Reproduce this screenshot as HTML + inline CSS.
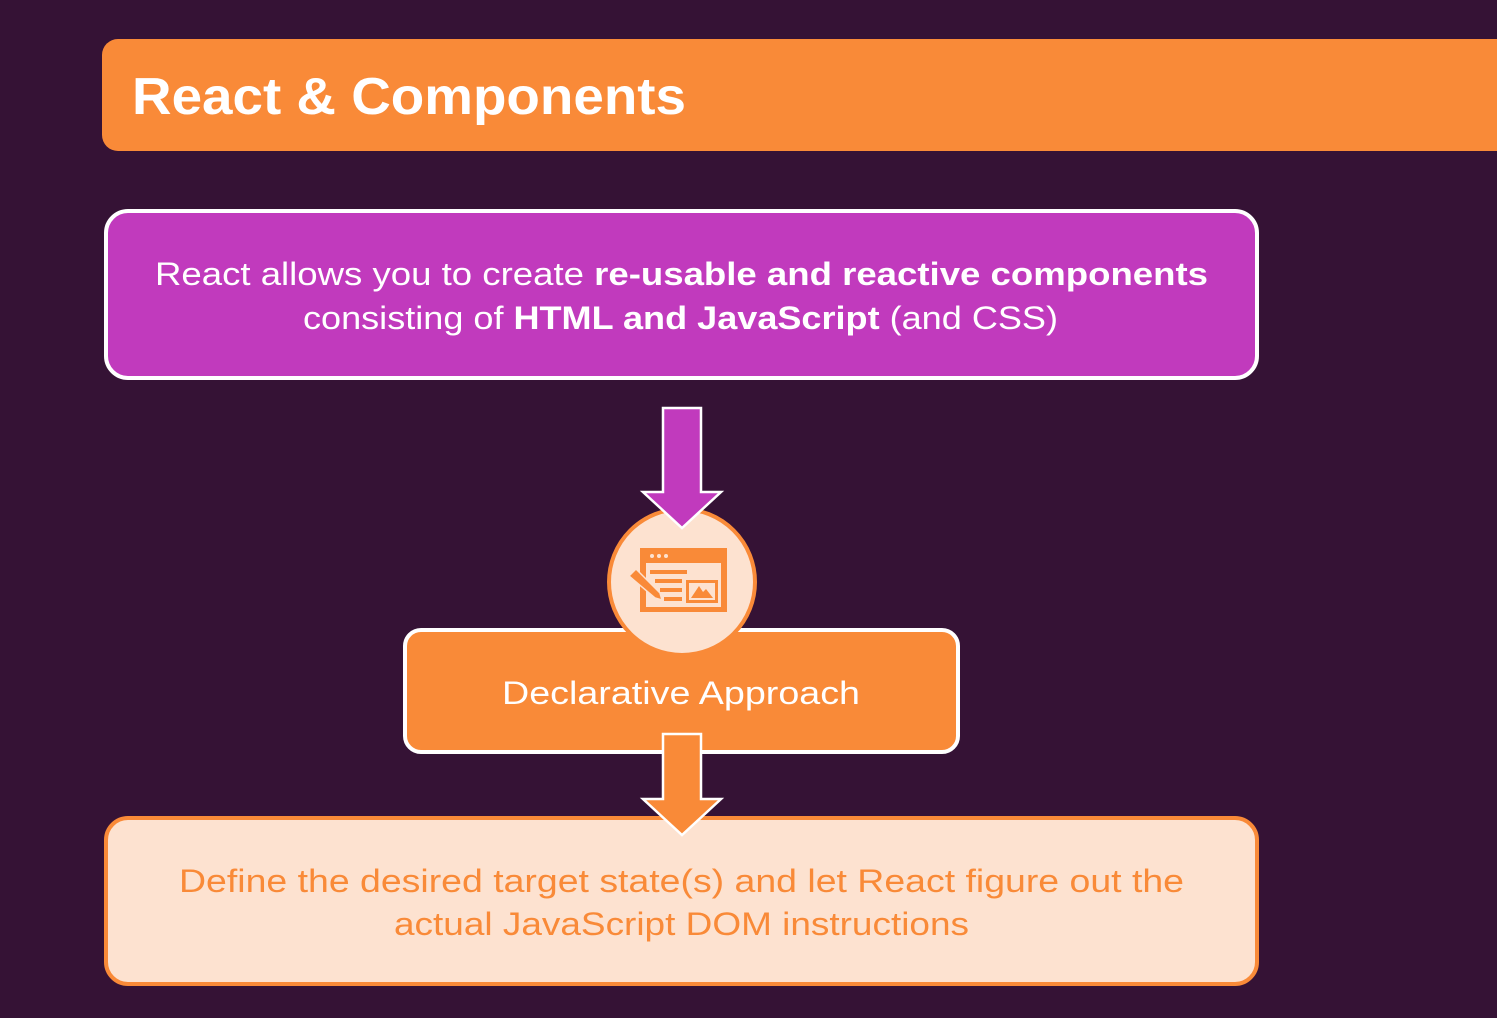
<!DOCTYPE html>
<html><head><meta charset="utf-8"><style>
html,body{margin:0;padding:0;background:#351235;}
svg{display:block}
text{font-family:"Liberation Sans",sans-serif;}
</style></head><body>
<svg width="1497" height="1018" viewBox="0 0 1497 1018" xmlns="http://www.w3.org/2000/svg">
<rect width="1497" height="1018" fill="#351235"/>
<rect x="102" y="39" width="1450" height="112" rx="16" fill="#f98a38"/>
<text x="132" y="114" font-size="52" font-weight="bold" fill="#fff" textLength="554" lengthAdjust="spacingAndGlyphs">React &amp; Components</text>

<rect x="106" y="211" width="1151" height="167" rx="22" fill="#c13abd" stroke="#fff" stroke-width="4"/>
<text x="155" y="285" font-size="32" fill="#fff" textLength="1053" lengthAdjust="spacingAndGlyphs">React allows you to create <tspan font-weight="bold">re-usable and reactive components</tspan></text>
<text x="303" y="329" font-size="32" fill="#fff" textLength="755" lengthAdjust="spacingAndGlyphs">consisting of <tspan font-weight="bold">HTML and JavaScript</tspan> (and CSS)</text>

<rect x="405" y="630" width="553" height="122" rx="16" fill="#f98a38" stroke="#fff" stroke-width="4"/>
<circle cx="682" cy="582" r="73" fill="#fde2d0" stroke="#f98a38" stroke-width="4"/>
<g fill="#f98a38">
<rect x="640" y="548" width="87" height="64"/>
<rect x="646" y="563" width="75" height="44" fill="#fde2d0"/>
<circle cx="652" cy="556" r="2" fill="#fde2d0"/><circle cx="659" cy="556" r="2" fill="#fde2d0"/><circle cx="666" cy="556" r="2" fill="#fde2d0"/>
<rect x="650" y="570" width="37" height="4"/>
<rect x="655" y="579" width="27" height="4"/>
<rect x="660" y="588" width="22" height="4"/>
<rect x="664" y="597" width="18" height="4"/>
<rect x="686" y="580" width="32" height="23"/>
<rect x="689" y="583" width="26" height="17" fill="#fde2d0"/>
<path d="M691 598 L699 586 L703 592 L706 589 L713 598 Z"/>
<path d="M629 576 L636 569 L660 593 L662 600 L655 598 Z" stroke="#fde2d0" stroke-width="1.5"/>
</g>

<path d="M663 408 H701 V492 H721 L682 528 L643 492 H663 Z" fill="#c13abd" stroke="#fff" stroke-width="2.5"/>

<text x="502" y="704" font-size="32" fill="#fff" textLength="358" lengthAdjust="spacingAndGlyphs">Declarative Approach</text>

<rect x="106" y="818" width="1151" height="166" rx="22" fill="#fde2d0" stroke="#f98a38" stroke-width="4"/>
<path d="M663 734 H701 V799 H721 L682 835 L643 799 H663 Z" fill="#f98a38" stroke="#fff" stroke-width="2.5"/>
<text x="179" y="892" font-size="32" fill="#f98a38" textLength="1005" lengthAdjust="spacingAndGlyphs">Define the desired target state(s) and let React figure out the</text>
<text x="394" y="935" font-size="32" fill="#f98a38" textLength="575" lengthAdjust="spacingAndGlyphs">actual JavaScript DOM instructions</text>
</svg>
</body></html>
